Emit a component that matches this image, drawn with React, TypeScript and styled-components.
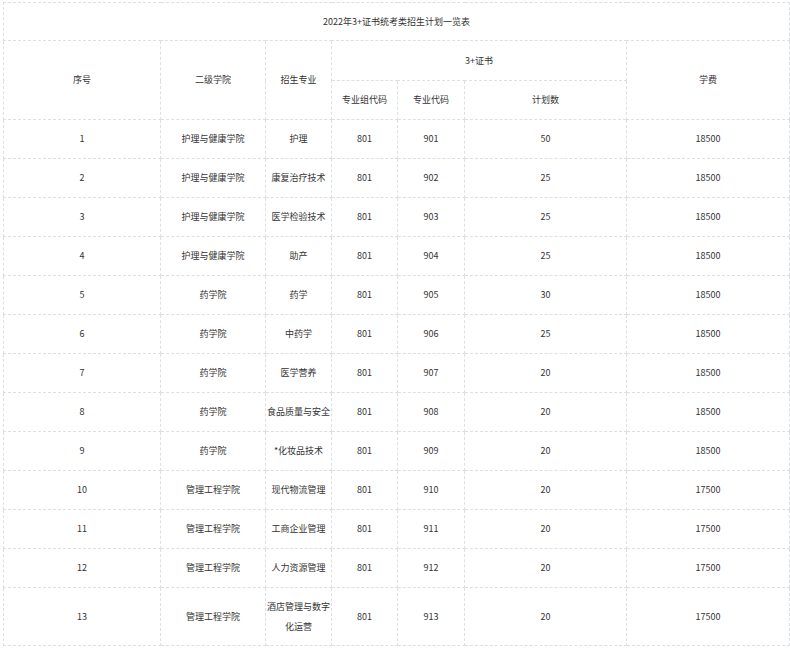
import styled, { createGlobalStyle } from 'styled-components'

const GlobalStyle = createGlobalStyle`
	body {
		margin: 0;
		padding: 2px 0 0 3px;
		background: #fff;
		font-family: 'Noto Sans CJK SC', 'Noto Sans', sans-serif;
	}
`

const rows: [number, string, string, number, number, number, number][] = [
	[1, '护理与健康学院', '护理', 801, 901, 50, 18500],
	[2, '护理与健康学院', '康复治疗技术', 801, 902, 25, 18500],
	[3, '护理与健康学院', '医学检验技术', 801, 903, 25, 18500],
	[4, '护理与健康学院', '助产', 801, 904, 25, 18500],
	[5, '药学院', '药学', 801, 905, 30, 18500],
	[6, '药学院', '中药学', 801, 906, 25, 18500],
	[7, '药学院', '医学营养', 801, 907, 20, 18500],
	[8, '药学院', '食品质量与安全', 801, 908, 20, 18500],
	[9, '药学院', '*化妆品技术', 801, 909, 20, 18500],
	[10, '管理工程学院', '现代物流管理', 801, 910, 20, 17500],
	[11, '管理工程学院', '工商企业管理', 801, 911, 20, 17500],
	[12, '管理工程学院', '人力资源管理', 801, 912, 20, 17500],
	[13, '管理工程学院', '酒店管理与数字化运营', 801, 913, 20, 17500],
]

const widths = [157, 105, 66, 66, 67, 162, 163]

export default function App() {
	return (
		<>
			<GlobalStyle />
			<Table>
				<colgroup>
					{widths.map((w, i) => (
						<col key={i} style={{ width: w }} />
					))}
				</colgroup>
				<tbody>
					<tr>
						<Cell colSpan={7} $h={38}>2022年3+证书统考类招生计划一览表</Cell>
					</tr>
					<tr>
						<Cell rowSpan={2} $h={40}>序号</Cell>
						<Cell rowSpan={2}>二级学院</Cell>
						<Cell rowSpan={2}>招生专业</Cell>
						<Cell colSpan={3} $h={40}>3+证书</Cell>
						<Cell rowSpan={2}>学费</Cell>
					</tr>
					<tr>
						<Cell $h={39}>专业组代码</Cell>
						<Cell>专业代码</Cell>
						<Cell>计划数</Cell>
					</tr>
					{rows.map(r => (
						<tr key={r[0]}>
							{r.map((v, i) => (
								<Cell key={i} $h={r[0] === 13 ? 58 : 39}>
									{v}
								</Cell>
							))}
						</tr>
					))}
				</tbody>
			</Table>
		</>
	)
}

const Table = styled.table`
	width: 786px;
	table-layout: fixed;
	border-collapse: collapse;
	border: 1px dashed #c9d3e3;
`
const Cell = styled.td<{ $h?: number }>`
	height: ${p => (p.$h ? `${p.$h - 1}px` : 'auto')};
	padding: 0 1px;
	border: 1px dashed #dcdfe4;
	text-align: center;
	vertical-align: middle;
	font-size: 9px;
	line-height: 20px;
	color: #333;
	word-break: break-all;
`
